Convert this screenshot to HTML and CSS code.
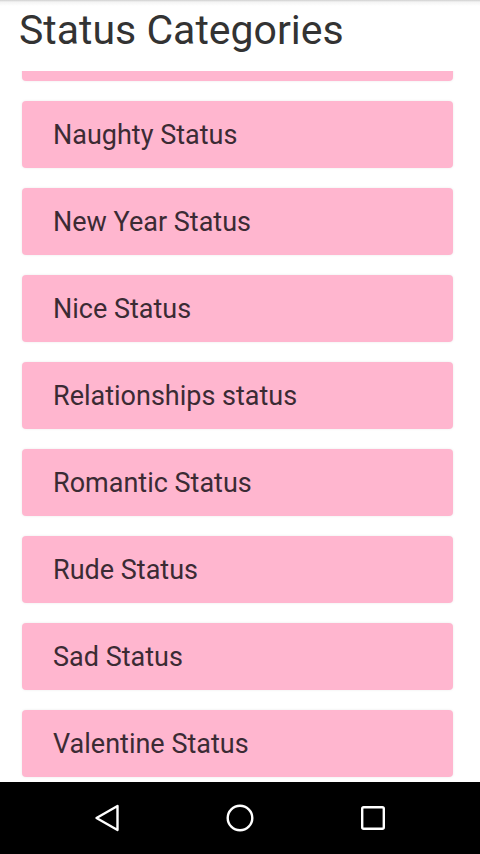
FILE: index.html
```html
<!DOCTYPE html>
<html lang="en">

<head>
    <meta charset="UTF-8">
    <meta name="viewport" content="width=device-width, initial-scale=1.0">
    <title>Status Categories</title>
    <link rel="stylesheet" href="styles.css">
</head>

<body>
    <div class="screen">
        <header class="header">
            <h1 class="title">Status Categories</h1>
        </header>

        <div class="list-viewport">
            <ul class="category-list">
                <!-- scrolled past, only its bottom edge shows -->
                <li class="category"></li>
                <li class="category">Naughty Status</li>
                <li class="category">New Year Status</li>
                <li class="category">Nice Status</li>
                <li class="category">Relationships status</li>
                <li class="category">Romantic Status</li>
                <li class="category">Rude Status</li>
                <li class="category">Sad Status</li>
                <li class="category">Valentine Status</li>
            </ul>
        </div>

        <nav class="navbar">
            <svg class="nav-icon" width="30" height="30" viewBox="0 0 30 30">
                <path d="M25.5 3 L4.5 15 L25.5 27 Z" fill="none" stroke="#fff" stroke-width="2.4" stroke-linejoin="round"/>
            </svg>
            <svg class="nav-icon" width="30" height="30" viewBox="0 0 30 30">
                <circle cx="15" cy="15" r="12.3" fill="none" stroke="#fff" stroke-width="2.4"/>
            </svg>
            <svg class="nav-icon" width="30" height="30" viewBox="0 0 30 30">
                <rect x="4.2" y="4.2" width="21.6" height="21.6" rx="1.5" fill="none" stroke="#fff" stroke-width="2.4"/>
            </svg>
        </nav>
    </div>
</body>

</html>
```

FILE: styles.css
```css
* {
    box-sizing: border-box;
}

body {
    margin: 0;
    font-family: Roboto, "Noto Sans", sans-serif;
    background-color: #fff;
}

.screen {
    width: 480px;
    height: 854px;
    display: flex;
    flex-direction: column;
    overflow: hidden;
}

.header {
    height: 71px;
    flex-shrink: 0;
    background: linear-gradient(to bottom, #cfcfcf 0px, #f4f4f4 2px, #fff 6px);
    padding-left: 19px;
}

.title {
    margin: 0;
    padding-top: 6px;
    font-size: 41px;
    font-weight: 400;
    color: #333;
    line-height: 48px;
    white-space: nowrap;
}

.list-viewport {
    flex: 1;
    overflow: hidden;
}

.category-list {
    list-style: none;
    margin: -57px 0 0 0;
    padding: 0 27px 0 22px;
    display: flex;
    flex-direction: column;
    gap: 20px;
}

.category {
    height: 67px;
    flex-shrink: 0;
    display: flex;
    align-items: center;
    padding-left: 31px;
    background-color: #ffb6cf;
    border-radius: 4px;
    box-shadow: 0 0 3px rgba(0, 0, 0, 0.08);
    font-size: 27px;
    color: #3b2b34;
}

.navbar {
    height: 72px;
    flex-shrink: 0;
    background-color: #000;
    display: flex;
    align-items: center;
    gap: 103px;
    padding-left: 92px;
}
```
